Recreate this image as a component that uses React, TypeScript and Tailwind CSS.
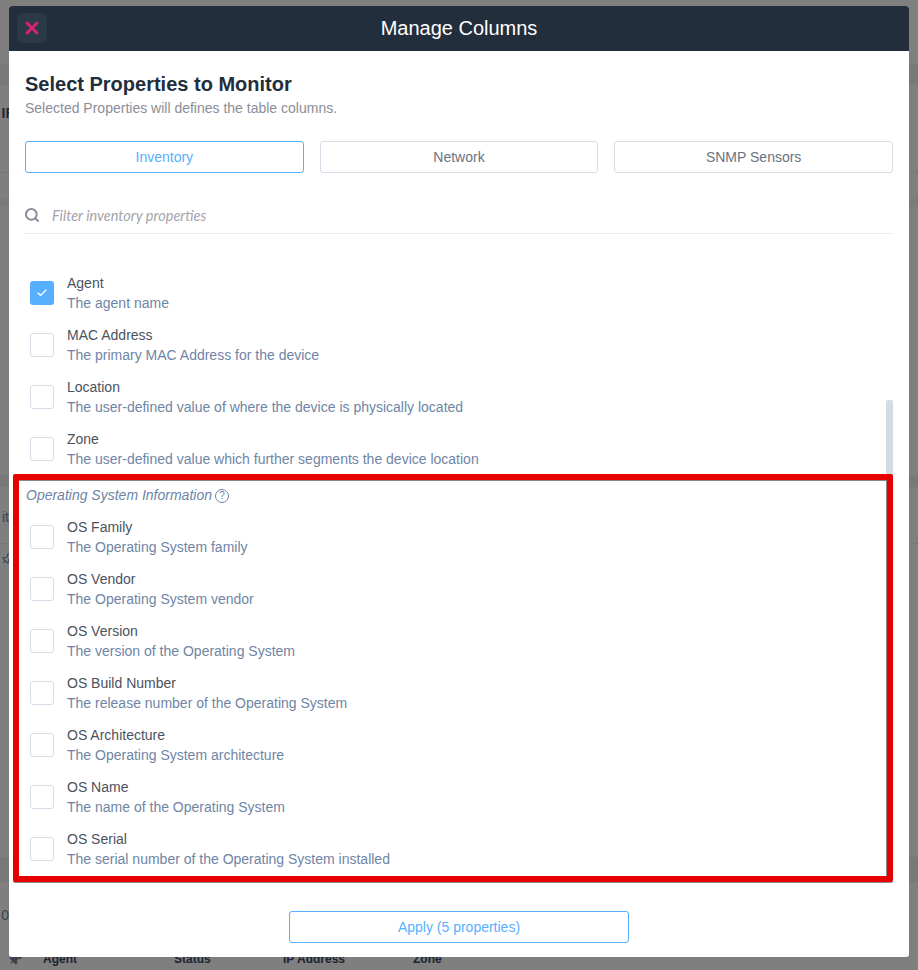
import React from "react";
import { Check, Search, X, Pin } from "lucide-react";

const generalRows = [
	{ name: "Agent", desc: "The agent name", checked: true },
	{ name: "MAC Address", desc: "The primary MAC Address for the device" },
	{ name: "Location", desc: "The user-defined value of where the device is physically located" },
	{ name: "Zone", desc: "The user-defined value which further segments the device location" },
];

const osRows = [
	{ name: "OS Family", desc: "The Operating System family" },
	{ name: "OS Vendor", desc: "The Operating System vendor" },
	{ name: "OS Version", desc: "The version of the Operating System" },
	{ name: "OS Build Number", desc: "The release number of the Operating System" },
	{ name: "OS Architecture", desc: "The Operating System architecture" },
	{ name: "OS Name", desc: "The name of the Operating System" },
	{ name: "OS Serial", desc: "The serial number of the Operating System installed" },
];

function PropertyRow({ name, desc, checked }: { name: string; desc: string; checked?: boolean }) {
	return (
		<div className="flex h-[52px] items-center pl-[5px]">
			{checked ? (
				<div className="flex h-6 w-6 items-center justify-center rounded-[3px] bg-[#56b0ff]">
					<Check className="h-3 w-3 text-white" strokeWidth={2.5} />
				</div>
			) : (
				<div className="h-6 w-6 rounded-[3px] border border-[#d5dde6] bg-white" />
			)}
			<div className="ml-[13px] leading-5">
				<div className="text-[14px] text-[#4a5260]">{name}</div>
				<div className="text-[14px] text-[#6f85a5]">{desc}</div>
			</div>
		</div>
	);
}

export default function App() {
	return (
		<div className="relative h-[970px] w-[918px] overflow-hidden bg-[#7f7f7f] font-['Liberation_Sans',Arial,sans-serif]">
			{/* page behind the dimmed backdrop */}
			<div className="flex h-full flex-col">
				<div className="h-[64px]" />
				<div className="h-[21px] bg-[#797979]" />
				<div className="h-[20px]" />
				<div className="flex h-[16px] w-[14px] items-center justify-end whitespace-nowrap text-[14px] font-bold text-[#1c2530]">
					<span className="shrink-0">IF</span>
				</div>
				<div className="h-[52px] border-b border-[#777]" />
				<div className="h-[26px]" />
				<div className="h-[8px] bg-[#7a7a7a]" />
				<div className="h-[268px]" />
				<div className="h-[12px] bg-[#797979]" />
				<div className="h-[22px]" />
				<div className="flex h-[16px] w-[9px] items-center justify-end whitespace-nowrap text-[14px] text-[#3c4450]">
					<span className="shrink-0">it</span>
				</div>
				<div className="h-[19px] border-b border-[#777]" />
				<div className="h-[9px]" />
				<div className="h-[16px] w-[9px] overflow-hidden">
					<Pin className="ml-[1px] h-[12px] w-[12px] rotate-45 text-[#3c4450]" />
				</div>
				<div className="h-[288px]" />
				<div className="h-[25px] bg-[#797979]" />
				<div className="h-[25px]" />
				<div className="flex h-[16px] w-[9px] items-center justify-end whitespace-nowrap text-[14px] text-[#3c4450]">
					<span className="shrink-0">0</span>
				</div>
				<div className="h-[28px]" />
				<div className="flex h-[16px] items-center text-[12px] font-bold text-[#1c2530]">
					<Pin className="ml-[8px] h-[14px] w-[14px] rotate-45 fill-[#3c4450] text-[#3c4450]" />
					<span className="ml-[21px] w-[131px]">Agent</span>
					<span className="w-[109px]">Status</span>
					<span className="w-[130px]">IP Address</span>
					<span>Zone</span>
				</div>
			</div>

			{/* modal */}
			<div className="absolute left-[9px] top-[6px] flex h-[951px] w-[900px] flex-col overflow-hidden rounded-[3px] bg-white">
				<div className="relative flex h-[45px] shrink-0 items-center justify-center bg-[#232e3c]">
					<div className="absolute left-2 top-[7px] flex h-[30px] w-[30px] items-center justify-center rounded-[5px] bg-[#2c3949]">
						<X className="h-5 w-5 text-[#d6246e]" strokeWidth={3.5} />
					</div>
					<span className="pb-[1px] text-[20px] text-white">Manage Columns</span>
				</div>

				<div className="flex flex-1 flex-col px-4">
					<h2 className="mt-[21px] text-[20px] font-bold leading-6 text-[#232e3c]">Select Properties to Monitor</h2>
					<p className="mt-[2px] text-[14px] leading-5 text-[#8b8d99]">Selected Properties will defines the table columns.</p>

					<div className="mt-[23px] grid grid-cols-3 gap-4">
						<button className="h-8 rounded-[3px] border border-[#56b0ff] text-[14px] text-[#56b0ff]">Inventory</button>
						<button className="h-8 rounded-[3px] border border-[#d5dde6] text-[14px] text-[#6b7480]">Network</button>
						<button className="h-8 rounded-[3px] border border-[#d5dde6] text-[14px] text-[#6b7480]">SNMP Sensors</button>
					</div>

					<div className="mt-[22px] flex h-[39px] items-center border-b border-[#e8ebef] pt-[2px]">
						<Search className="-ml-[1px] h-4 w-4 text-[#8b8d99]" strokeWidth={3} />
						<span className="ml-3 mt-[2px] font-['Lato',sans-serif] text-[14.5px] italic text-[#a3a5ad]">Filter inventory properties</span>
					</div>

					<div className="relative mt-[33px]">
						{generalRows.map((row) => (
							<PropertyRow key={row.name} {...row} />
						))}
						<div className="flex h-[36px] items-center gap-[3px] pl-[1px] pt-[5px] text-[14px] italic text-[#6f85a5]">
							Operating System Information
							<span className="flex h-[14px] w-[14px] items-center justify-center rounded-full border border-[#6f85a5] text-[10px] not-italic">?</span>
						</div>
						{osRows.map((row) => (
							<PropertyRow key={row.name} {...row} />
						))}
						<div className="absolute right-0 top-[133px] h-[80px] w-[7px] rounded-t-[2px] bg-[#d3dbe3]" />
					</div>

					<div className="mt-auto flex justify-center pb-[14px]">
						<button className="h-8 w-[340px] rounded-[3px] border border-[#56b0ff] text-[14px] text-[#56b0ff]">Apply (5 properties)</button>
					</div>
				</div>
			</div>

			{/* red annotation box */}
			<div className="absolute left-[13px] top-[474px] h-[408px] w-[880px] rounded-[2px] border-[6px] border-[#e60000] shadow-[inset_-1px_1px_0_#888,0_1px_0_#888]" />
		</div>
	);
}
